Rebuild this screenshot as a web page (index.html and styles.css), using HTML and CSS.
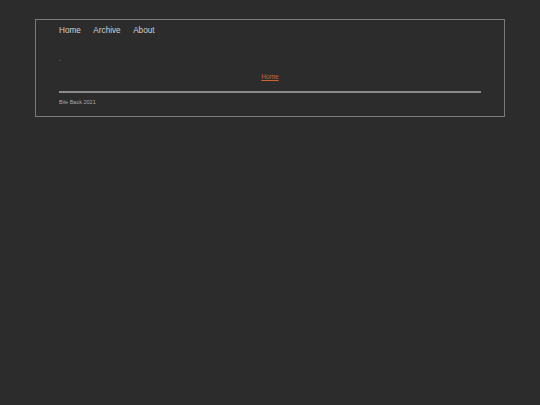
FILE: index.html
```html
<!DOCTYPE html>
<html>
<head>
<meta charset="utf-8">
<link rel="stylesheet" href="styles.css">
</head>
<body>
<div class="page">
  <nav class="nav">
    <a class="nav-link" href="#home">Home</a>
    <a class="nav-link" href="#archive">Archive</a>
    <a class="nav-link" href="#about">About</a>
  </nav>
  <div class="dot">.</div>
  <div class="crumb"><a class="crumb-link" href="#top">Home</a></div>
  <hr class="rule">
  <footer class="foot">Bile Back 2021</footer>
</div>
</body>
</html>
```
FILE: styles.css
```css
html, body {
  margin: 0;
  padding: 0;
  background: #2c2c2c;
  font-family: "Liberation Sans", Arial, sans-serif;
}
body {
  padding: 19px 35px 0 35px;
}
.page {
  border: 1px solid #7a7a7a;
  padding: 5px 23px 11px 23px;
}
.nav {
  display: flex;
  gap: 12.5px;
  font-size: 8.2px;
  line-height: 12px;
}
.nav-link, .nav-link:visited {
  color: #d2d2d2;
  text-decoration: none;
}
.dot {
  color: #9a9a9a;
  font-size: 7px;
  line-height: 8px;
  margin-top: 18px;
}
.crumb {
  text-align: center;
  font-size: 6.5px;
  line-height: 8px;
  margin-top: 10px;
}
.crumb-link, .crumb-link:visited {
  color: #d0623a;
}
.rule {
  border: 0;
  height: 2px;
  background: #8a8a8a;
  margin: 10px 0 0 0;
}
.foot {
  color: #a8a8a8;
  font-size: 5.5px;
  line-height: 6px;
  margin-top: 6px;
}
```
